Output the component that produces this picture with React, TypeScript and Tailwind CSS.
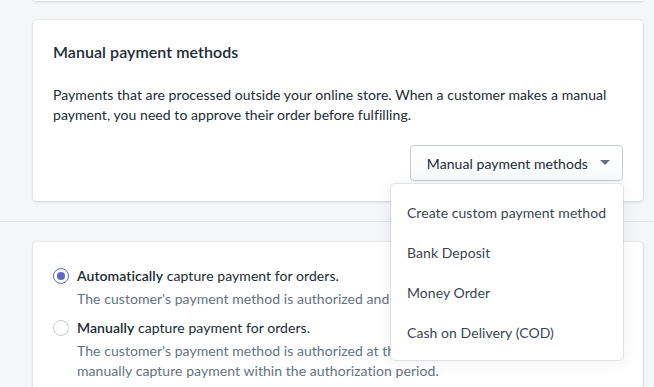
const menuItems = [
  'Create custom payment method',
  'Bank Deposit',
  'Money Order',
  'Cash on Delivery (COD)',
]

const cardShadow = 'shadow-[0_0_0_1px_rgba(63,63,68,0.05),0_1px_3px_0_rgba(63,63,68,0.15)]'

function Radio({ checked }: { checked?: boolean }) {
  return (
    <span
      className={
        'mt-[2px] flex h-4 w-4 flex-shrink-0 items-center justify-center rounded-full border bg-white ' +
        (checked ? 'border-[#5c6ac4]' : 'border-[#c4cdd5]')
      }
    >
      {checked && <span className="h-2 w-2 rounded-full bg-[#5c6ac4]" />}
    </span>
  )
}

export default function App() {
  return (
    <div
      className="relative h-[387px] w-[654px] overflow-hidden bg-[#f4f6f8] text-[14px] tracking-[0.06px] text-[#212b36]"
      style={{ fontFamily: 'Lato, "Liberation Sans", sans-serif' }}
    >
      <div className="pl-[33px] pr-[11px]">
        {/* bottom of previous card */}
        <div className={`h-[2px] -mt-px rounded-b bg-white ${cardShadow}`} />

        <div className={`mt-[19px] rounded bg-white p-5 ${cardShadow}`}>
          <h2 className="text-[16px] font-semibold leading-6">Manual payment methods</h2>
          <p className="mt-[21px] leading-5">
            Payments that are processed outside your online store. When a customer makes a manual
            payment, you need to approve their order before fulfilling.
          </p>
          <div className="mt-5 flex justify-end">
            <button className="flex h-9 items-center gap-3 rounded border border-[#c4cdd5] bg-gradient-to-b from-white to-[#f9fafb] pl-4 pr-3 shadow-[0_1px_0_0_rgba(22,29,37,0.05)]">
              <span>Manual payment methods</span>
              <svg width="10" height="6" viewBox="0 0 10 6">
                <path d="M0 0h10L5 5z" fill="#637381" />
              </svg>
            </button>
          </div>
        </div>
      </div>

      <div className="mt-5 border-t border-[#dfe3e8] pl-[33px] pr-[11px] pt-5">
        <div className={`rounded bg-white px-5 pt-6 pb-5 ${cardShadow}`}>
          <div className="flex gap-2">
            <Radio checked />
            <div>
              <div className="leading-5">
                <span className="font-semibold">Automatically</span> capture payment for orders.
              </div>
              <div className="mt-[3px] leading-5 text-[#637381]">
                The customer's payment method is authorized and charged automatically.
              </div>
            </div>
          </div>
          <div className="mt-[9px] flex gap-2">
            <Radio />
            <div>
              <div className="leading-5">
                <span className="font-semibold">Manually</span> capture payment for orders.
              </div>
              <div className="mt-[3px] leading-5 text-[#637381]">
                The customer's payment method is authorized at the time of their order. You need to
                manually capture payment within the authorization period.
              </div>
            </div>
          </div>
        </div>
      </div>

      {/* open popover */}
      <div className="absolute left-[391px] top-[184px] w-[232px] rounded bg-white py-2 shadow-[0_0_0_1px_rgba(6,44,82,0.1),0_2px_16px_rgba(33,43,54,0.08)]">
        {menuItems.map(item => (
          <div key={item} className="flex h-10 items-center px-4 text-[#3b4550]">
            {item}
          </div>
        ))}
      </div>
    </div>
  )
}
